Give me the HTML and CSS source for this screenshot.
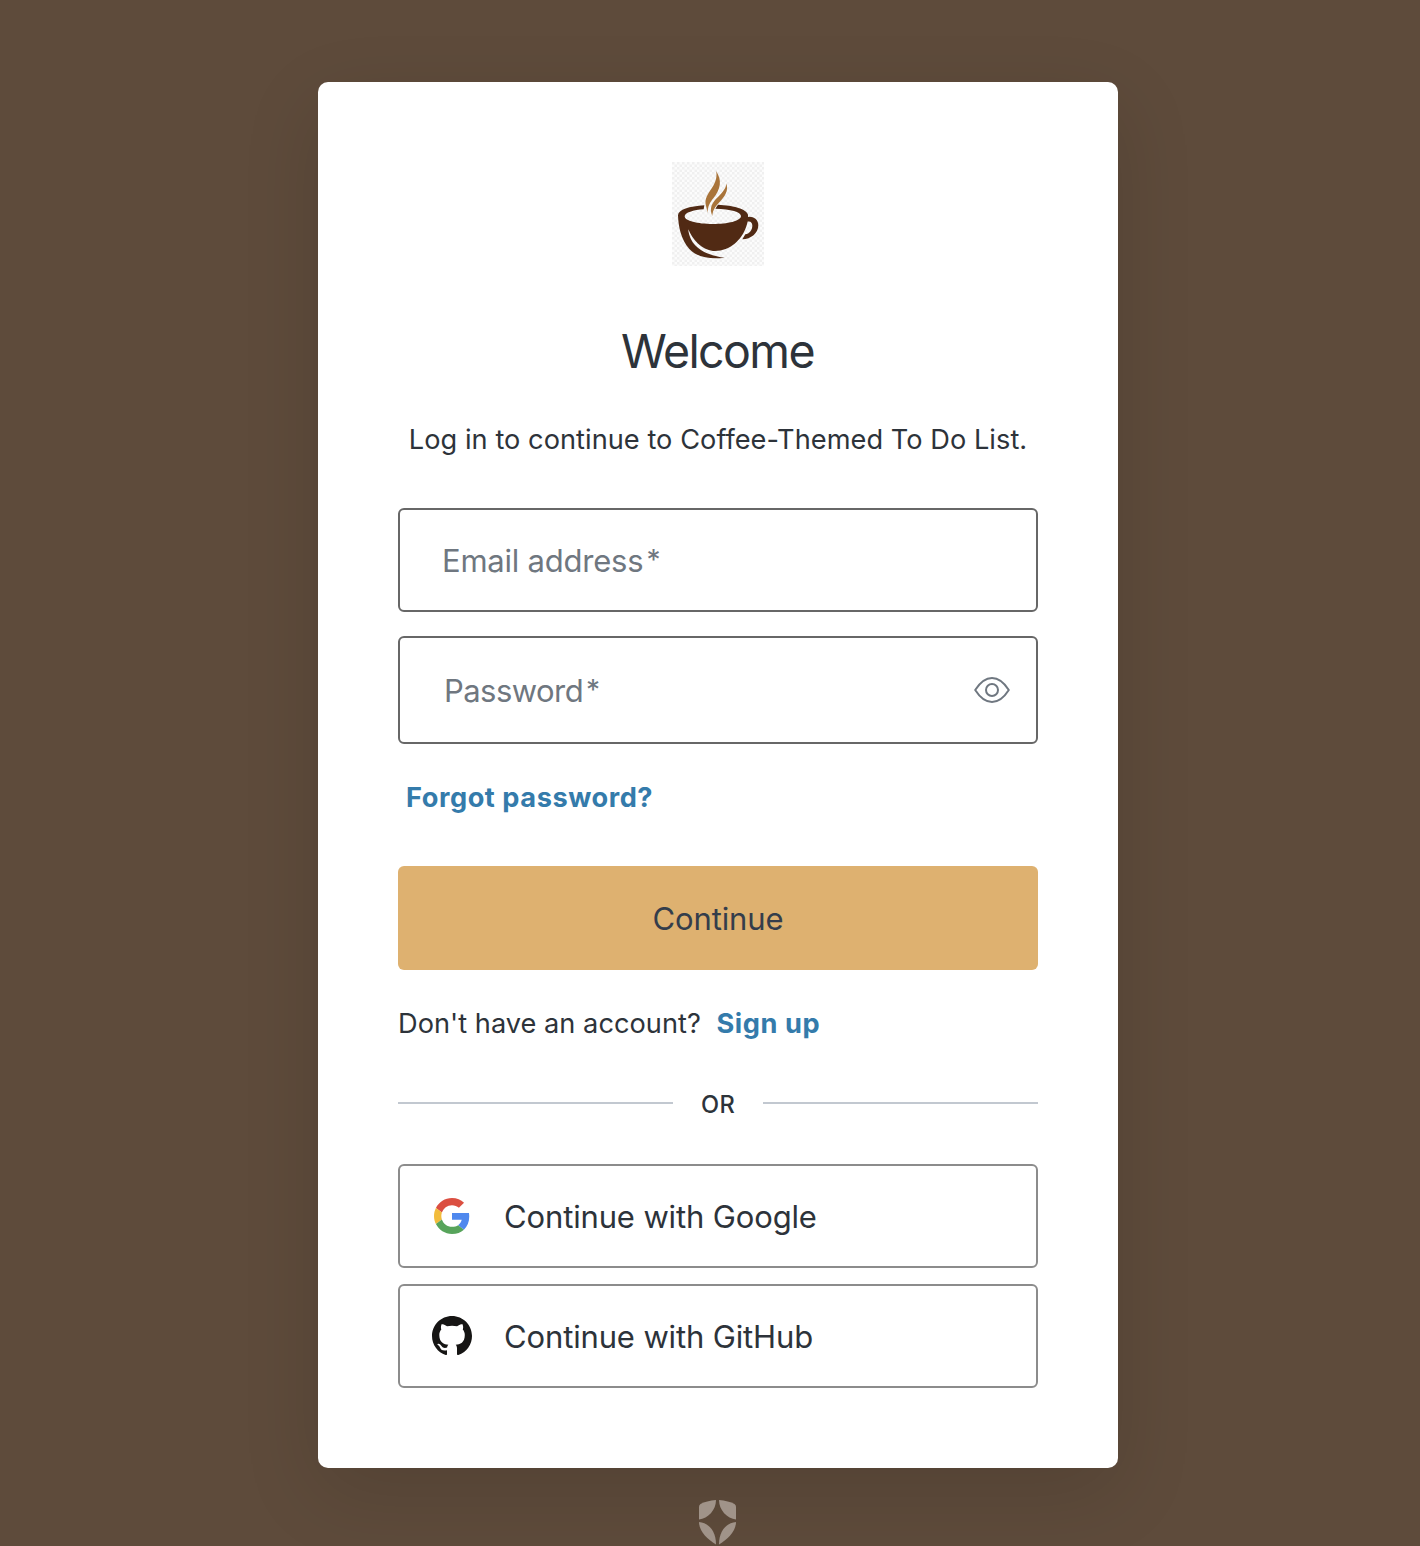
FILE: index.html
```html
<!DOCTYPE html>
<html lang="en">
<head>
<meta charset="utf-8">
<title>Log in | Coffee-Themed To Do List</title>
<link rel="stylesheet" href="styles.css">
</head>
<body>
<main class="page">
  <section class="card">
    <svg class="logo" viewBox="30 30 276 312" role="img" aria-label="Coffee cup">
      <defs>
        <pattern id="checks" width="15" height="15" patternUnits="userSpaceOnUse">
          <rect width="15" height="15" fill="#fcfcfc"/>
          <path d="M0 0h7.5v7.5H0zM7.5 7.5H15V15H7.5z" fill="#f0f0f0"/>
        </pattern>
      </defs>
      <rect x="30" y="30" width="276" height="312" fill="url(#checks)"/>
      <g fill="#512a14">
        <path fill-rule="evenodd" d="M127 160C82 163 49 173 48 190C49 222 57 264 82 291C107 318 150 322 188 317C150 313 104 298 87 262C82 251 79 241 79 232C91 262 119 294 153 297C202 300 239 264 252 226C257 212 259 200 258 188C254 171 215 160 168 158L160 170C207 171 237 180 237 192C237 207 197 216 152 216C107 216 68 207 68 193C68 182 94 174 125 172Z"/>
        <path d="M254 196C267 191 289 198 289 220C289 243 267 262 241 262L250 247C262 245 271 234 271 221C271 211 265 206 256 209Z"/>
      </g>
      <g fill="#a9743a">
        <path d="M162 57C166 72 162 89 151 106C138 126 126 142 132 161L137 183C137 165 142 154 154 139C176 112 181 84 162 57Z"/>
        <path d="M193 94C193 108 182 121 168 135C150 152 141 168 151 192C152 178 157 167 170 153C190 132 200 117 193 94Z"/>
      </g>
    </svg>

    <h1 class="title">Welcome</h1>
    <p class="subtitle">Log in to continue to Coffee-Themed To Do List.</p>

    <form class="form">
      <label class="field field-email"><span class="field-label">Email address<span class="required">*</span></span></label>
      <label class="field field-password">
        <span class="field-label">Password<span class="required">*</span></span>
        <svg class="eye" viewBox="0 0 36 28" fill="none" stroke="#6f7780" stroke-width="2">
          <path d="M1.2 14C6 6.500 11 2 18 2s12 4.500 16.800 12C30 21.500 25 26 18 26S6 21.500 1.200 14Z" stroke-linejoin="round"/>
          <circle cx="18" cy="14" r="6"/>
        </svg>
      </label>
      <a class="link forgot">Forgot password?</a>
      <button class="submit" type="button">Continue</button>
    </form>

    <p class="signup">Don't have an account? <a class="link">Sign up</a></p>
    <div class="divider"><span class="divider-text">OR</span></div>

    <div class="providers">
      <button class="provider" type="button">
        <svg class="provider-icon google" viewBox="0 0 48 48">
          <path fill="#db4f41" d="M24 9.500c3.540 0 6.710 1.220 9.210 3.600l6.850-6.850C35.900 2.380 30.470 0 24 0 14.620 0 6.510 5.380 2.560 13.220l7.980 6.190C12.430 13.720 17.740 9.500 24 9.500z"/>
          <path fill="#4f88ee" d="M46.980 24.550c0-1.570-.15-3.090-.38-4.550H24v9.020h12.940c-.58 2.960-2.260 5.480-4.780 7.180l7.730 6c4.510-4.180 7.090-10.360 7.090-17.650z"/>
          <path fill="#f2bc3c" d="M10.530 28.590c-.48-1.450-.76-2.990-.76-4.590s.27-3.140.76-4.590l-7.980-6.190C.92 16.460 0 20.120 0 24c0 3.880.92 7.540 2.560 10.780l7.970-6.190z"/>
          <path fill="#57a45b" d="M24 48c6.480 0 11.930-2.130 15.890-5.810l-7.730-6c-2.150 1.450-4.920 2.300-8.160 2.300-6.260 0-11.570-4.220-13.470-9.910l-7.980 6.190C6.510 42.620 14.620 48 24 48z"/>
        </svg>
        <span>Continue with Google</span>
      </button>
      <button class="provider" type="button">
        <svg class="provider-icon github" viewBox="0 0 16 16">
          <path fill="#161514" d="M8 0C3.580 0 0 3.580 0 8c0 3.540 2.290 6.530 5.470 7.590.4.070.55-.17.55-.38 0-.19-.01-.82-.01-1.490-2.010.37-2.530-.49-2.690-.94-.09-.23-.48-.94-.82-1.130-.28-.15-.68-.52-.01-.53.63-.01 1.080.58 1.230.82.72 1.210 1.870.87 2.330.66.07-.52.28-.87.51-1.070-1.780-.2-3.640-.89-3.640-3.950 0-.87.31-1.590.82-2.150-.08-.2-.36-1.020.08-2.120 0 0 .67-.21 2.200.82.64-.18 1.320-.27 2-.27s1.360.09 2 .27c1.530-1.040 2.200-.82 2.200-.82.44 1.100.16 1.920.08 2.120.51.56.82 1.270.82 2.150 0 3.070-1.870 3.750-3.650 3.950.29.25.54.73.54 1.480 0 1.070-.01 1.930-.01 2.200 0 .21.15.46.55.38A8.010 8.010 0 0 0 16 8c0-4.420-3.580-8-8-8z"/>
        </svg>
        <span>Continue with GitHub</span>
      </button>
    </div>
  </section>

  <svg class="badge" viewBox="0 0 37 45" fill="#a09389" aria-label="Auth0">
    <path d="M17 0C11 .5 5 2 1.500 4Q0 5 0 7V19.500C9 18.500 17 10 17 0Z"/>
    <path d="M20 0C26 .5 32 2 35.500 4Q37 5 37 7V19.500C28 18.500 20 10 20 0Z"/>
    <path d="M0 22C10 23 17 31 17 44.500C8 39 0 31 0 22Z"/>
    <path d="M37 22C27 23 20 31 20 44.500C29 39 37 31 37 22Z"/>
  </svg>
</main>
</body>
</html>
```
FILE: styles.css
```css
* {
  box-sizing: border-box;
}

body {
  margin: 0;
  background: #5e4b3b;
  color: #2d333a;
  font-family: Inter, "Liberation Sans", sans-serif;
}

.page {
  display: flex;
  flex-direction: column;
  align-items: center;
  height: 1546px;
  padding: 82px 0 0 16px;
  overflow: hidden;
}

.card {
  display: flex;
  flex-direction: column;
  flex: none;
  width: 800px;
  height: 1386px;
  padding: 80px;
  border-radius: 10px;
  background: #fff;
  box-shadow: 0 24px 80px rgba(0, 0, 0, 0.12);
}

.logo {
  flex: none;
  align-self: center;
  width: 92px;
  height: 104px;
}

.title {
  margin: 47px 0 0;
  font-size: 46.5px;
  font-weight: 400;
  line-height: 76px;
  letter-spacing: -1.6px;
  text-indent: -1px;
  text-align: center;
}

.subtitle {
  margin: 29px 0 0;
  font-size: 27.2px;
  line-height: 44px;
  letter-spacing: 0.04px;
  text-align: center;
  white-space: nowrap;
}

.form {
  display: flex;
  flex-direction: column;
  margin-top: 46px;
}

.field {
  display: flex;
  align-items: center;
  justify-content: space-between;
  height: 104px;
  padding: 2px 26px 0 42px;
  border: 2px solid #676767;
  border-radius: 6px;
  color: #6f7780;
  font-size: 31px;
  letter-spacing: -0.22px;
}

.field-password {
  height: 108px;
  margin-top: 24px;
  padding: 0 26px 0 44px;
  letter-spacing: -0.55px;
}

.field-label {
  line-height: 40px;
}

.field-password .field-label {
  padding-top: 2px;
}

.required {
  margin-left: 3px;
  font-size: 28px;
  line-height: 1;
  vertical-align: 2px;
}

.eye {
  width: 36px;
  height: 28px;
}

.link {
  color: #347bab;
  font-weight: 700;
  letter-spacing: 0.55px;
}

.forgot {
  margin: 32px 0 0 8px;
  font-size: 27.2px;
  line-height: 44px;
}

.submit {
  height: 104px;
  margin-top: 46px;
  padding: 0;
  border: 0;
  border-radius: 6px;
  background: #deb170;
  color: #343d4b;
  font: inherit;
  font-size: 31px;
  letter-spacing: -0.12px;
}

.signup {
  margin: 32px 0 0;
  font-size: 27.2px;
  line-height: 44px;
  letter-spacing: 0.02px;
}

.signup .link {
  margin-left: 8px;
}

.divider {
  display: flex;
  align-items: center;
  height: 40px;
  margin-top: 37px;
  font-size: 23.6px;
  font-weight: 500;
  letter-spacing: 0.2px;
}

.divider::before,
.divider::after {
  content: "";
  flex: 1;
  height: 2px;
  background: #c2c8d0;
}

.divider-text {
  width: 90px;
  padding-top: 3px;
  text-align: center;
}

.providers {
  display: flex;
  flex-direction: column;
  gap: 16px;
  margin-top: 41px;
}

.provider {
  display: flex;
  align-items: center;
  height: 104px;
  padding: 0 32px;
  gap: 32px;
  border: 2px solid #8c8c8c;
  border-radius: 6px;
  background: #fff;
  color: #2d333a;
  font: inherit;
  font-size: 31px;
  letter-spacing: -0.14px;
}

.provider-icon {
  width: 40px;
  height: 40px;
}

.google {
  padding: 2px;
}

.badge {
  flex: none;
  width: 37px;
  height: 45px;
  margin: 32px 2px 0 0;
}
```
